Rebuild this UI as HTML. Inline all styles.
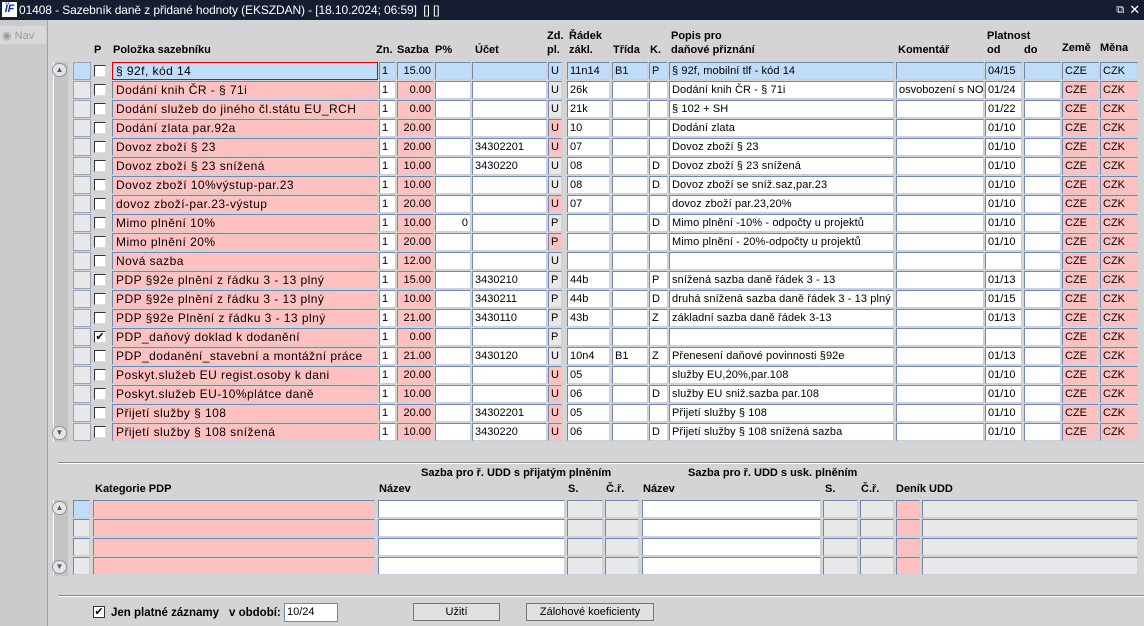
<!DOCTYPE html>
<html><head><meta charset="utf-8"><style>
*{box-sizing:border-box;margin:0;padding:0}
body{width:1144px;height:626px;overflow:hidden;background:#d4d4d4;font-family:"Liberation Sans",sans-serif;font-size:11px;color:#000;position:relative}
.tb{position:absolute;left:0;top:0;width:1144px;height:20px;background:#161d30;color:#fff;font-size:12px;line-height:20px;padding-left:19px;white-space:nowrap;letter-spacing:-0.1px}
.logo{position:absolute;left:2px;top:2px;width:15px;height:15px;background:#fff;color:#1030b0;font-weight:bold;font-style:italic;font-size:11px;line-height:15px;text-align:center}
.lp{position:absolute;left:0;top:20px;width:48px;height:606px;background:#cbcbcb;border-right:1px solid #9aa4b8}
.a{position:absolute}
.h{position:absolute;font-weight:bold;font-size:11px;white-space:nowrap}
.r{position:absolute;left:0;height:18px;width:1144px}
.r>div{position:absolute;top:0;height:18px;border:1px solid #7686a6;border-right-color:#c8d0e0;border-bottom-color:#c8d0e0;background:#fff;line-height:16px;padding-left:2px;white-space:nowrap;overflow:hidden;font-size:11px}
.r>.ind{left:73px;width:18px;background:#e8e8e8;border-color:#9aa4b8}
.r>.cb{left:94px;width:12px;height:12px;top:3px;border:1px solid #333;border-right-color:#ddd;border-bottom-color:#ddd;padding:0;line-height:10px;font-size:11px;text-align:center}
.c1{left:112px;width:266px;background:#ffc0c0!important;font-size:12px!important;letter-spacing:0.45px;padding-left:3px!important}
.c2{left:379px;width:17px}
.c3{left:397px;width:37px;text-align:right;padding-right:2px;background:#ffc0c0!important}
.c4{left:435px;width:36px;text-align:right;padding-right:2px}
.c5{left:472px;width:75px}
.c6{left:548px;width:14px;background:#e8e8e8!important}
.c6.p{background:#ffc0c0!important}
.c7{left:567px;width:43px}
.c8{left:612px;width:36px}
.c9{left:649px;width:19px}
.c10{left:669px;width:225px;letter-spacing:0.1px}
.c11{left:896px;width:88px}
.c12{left:985px;width:37px}
.c13{left:1024px;width:37px}
.c14{left:1062px;width:37px;background:#ffc0c0!important}
.c15{left:1100px;width:38px;background:#ffc0c0!important}
.sel>div{background:#c0dcf8!important}
.sel>.c1{border:1px solid #e00000!important}
.sel>.cb{background:#fff!important}
.sb{position:absolute;left:53px;width:15px;background:#c4c4c4;border-left:1px solid #fff}
.arr{position:absolute;left:52px;width:15px;height:14px;border:1px solid #8a94a8;border-radius:7px;background:#e4e4e4;font-size:8px;line-height:12px;text-align:center;color:#556}
.line{position:absolute;left:58px;width:1086px;height:2px;border-top:1px solid #888;border-bottom:1px solid #fff}
.b>div{position:absolute;height:18px;border:1px solid #7686a6;border-right-color:#c8d0e0;border-bottom-color:#c8d0e0;background:#fff}
.btn{position:absolute;height:18px;border:1px solid #777;background:#e0e0e0;text-align:center;line-height:16px;font-size:11px}
</style></head><body>
<div class="tb"><div class="logo">ÏF</div>01408 - Sazebník daně z přidané hodnoty (EKSZDAN) - [18.10.2024; 06:59]&nbsp; [] []
<span style="position:absolute;right:20px;top:0;font-size:11px">⧉</span><span style="position:absolute;right:4px;top:0;font-size:13px">✕</span></div>
<div class="lp"><div class="a" style="left:0px;top:6px;width:46px;height:18px;background:#d8d8d8"></div><div class="a" style="left:2px;top:9px;color:#999;font-size:11px">◉ Nav</div></div>

<div class="h" style="left:94px;top:44px">P</div>
<div class="h" style="left:113px;top:44px">Položka sazebníku</div>
<div class="h" style="left:376px;top:44px">Zn.</div>
<div class="h" style="left:397px;top:44px">Sazba</div>
<div class="h" style="left:435px;top:44px">P%</div>
<div class="h" style="left:475px;top:44px">Účet</div>
<div class="h" style="left:547px;top:30px">Zd.</div>
<div class="h" style="left:547px;top:44px">pl.</div>
<div class="h" style="left:569px;top:30px">Řádek</div>
<div class="h" style="left:569px;top:44px">zákl.</div>
<div class="h" style="left:613px;top:44px">Třída</div>
<div class="h" style="left:650px;top:44px">K.</div>
<div class="h" style="left:671px;top:30px">Popis pro</div>
<div class="h" style="left:671px;top:44px">daňové přiznání</div>
<div class="h" style="left:898px;top:44px">Komentář</div>
<div class="h" style="left:987px;top:30px">Platnost</div>
<div class="h" style="left:987px;top:44px">od</div>
<div class="h" style="left:1024px;top:44px">do</div>
<div class="h" style="left:1062px;top:42px">Země</div>
<div class="h" style="left:1100px;top:42px">Měna</div>

<div class="sb" style="top:62px;height:380px"></div>
<div class="arr" style="top:63px">▲</div>
<div class="arr" style="top:426px">▼</div>

<div class="r sel" style="top:62px"><div class="ind"></div><div class="cb"></div><div class="c1">§ 92f, kód 14</div><div class="c2">1</div><div class="c3">15.00</div><div class="c4"></div><div class="c5"></div><div class="c6">U</div><div class="c7">11n14</div><div class="c8">B1</div><div class="c9">P</div><div class="c10">§ 92f, mobilní tlf - kód 14</div><div class="c11"></div><div class="c12">04/15</div><div class="c13"></div><div class="c14">CZE</div><div class="c15">CZK</div></div>
<div class="r" style="top:81px"><div class="ind"></div><div class="cb"></div><div class="c1">Dodání knih ČR - § 71i</div><div class="c2">1</div><div class="c3">0.00</div><div class="c4"></div><div class="c5"></div><div class="c6">U</div><div class="c7">26k</div><div class="c8"></div><div class="c9"></div><div class="c10">Dodání knih ČR - § 71i</div><div class="c11">osvobození s NO</div><div class="c12">01/24</div><div class="c13"></div><div class="c14">CZE</div><div class="c15">CZK</div></div>
<div class="r" style="top:100px"><div class="ind"></div><div class="cb"></div><div class="c1">Dodání služeb do jiného čl.státu EU_RCH</div><div class="c2">1</div><div class="c3">0.00</div><div class="c4"></div><div class="c5"></div><div class="c6">U</div><div class="c7">21k</div><div class="c8"></div><div class="c9"></div><div class="c10">§ 102 + SH</div><div class="c11"></div><div class="c12">01/22</div><div class="c13"></div><div class="c14">CZE</div><div class="c15">CZK</div></div>
<div class="r" style="top:119px"><div class="ind"></div><div class="cb"></div><div class="c1">Dodání zlata par.92a</div><div class="c2">1</div><div class="c3">20.00</div><div class="c4"></div><div class="c5"></div><div class="c6 p">U</div><div class="c7">10</div><div class="c8"></div><div class="c9"></div><div class="c10">Dodání zlata</div><div class="c11"></div><div class="c12">01/10</div><div class="c13"></div><div class="c14">CZE</div><div class="c15">CZK</div></div>
<div class="r" style="top:138px"><div class="ind"></div><div class="cb"></div><div class="c1">Dovoz zboží § 23</div><div class="c2">1</div><div class="c3">20.00</div><div class="c4"></div><div class="c5">34302201</div><div class="c6 p">U</div><div class="c7">07</div><div class="c8"></div><div class="c9"></div><div class="c10">Dovoz zboží § 23</div><div class="c11"></div><div class="c12">01/10</div><div class="c13"></div><div class="c14">CZE</div><div class="c15">CZK</div></div>
<div class="r" style="top:157px"><div class="ind"></div><div class="cb"></div><div class="c1">Dovoz zboží § 23 snížená</div><div class="c2">1</div><div class="c3">10.00</div><div class="c4"></div><div class="c5">3430220</div><div class="c6">U</div><div class="c7">08</div><div class="c8"></div><div class="c9">D</div><div class="c10">Dovoz zboží § 23 snížená</div><div class="c11"></div><div class="c12">01/10</div><div class="c13"></div><div class="c14">CZE</div><div class="c15">CZK</div></div>
<div class="r" style="top:176px"><div class="ind"></div><div class="cb"></div><div class="c1">Dovoz zboží 10%výstup-par.23</div><div class="c2">1</div><div class="c3">10.00</div><div class="c4"></div><div class="c5"></div><div class="c6">U</div><div class="c7">08</div><div class="c8"></div><div class="c9">D</div><div class="c10">Dovoz zboží se sníž.saz,par.23</div><div class="c11"></div><div class="c12">01/10</div><div class="c13"></div><div class="c14">CZE</div><div class="c15">CZK</div></div>
<div class="r" style="top:195px"><div class="ind"></div><div class="cb"></div><div class="c1">dovoz zboží-par.23-výstup</div><div class="c2">1</div><div class="c3">20.00</div><div class="c4"></div><div class="c5"></div><div class="c6 p">U</div><div class="c7">07</div><div class="c8"></div><div class="c9"></div><div class="c10">dovoz zboží par.23,20%</div><div class="c11"></div><div class="c12">01/10</div><div class="c13"></div><div class="c14">CZE</div><div class="c15">CZK</div></div>
<div class="r" style="top:214px"><div class="ind"></div><div class="cb"></div><div class="c1">Mimo plnění 10%</div><div class="c2">1</div><div class="c3">10.00</div><div class="c4">0</div><div class="c5"></div><div class="c6">P</div><div class="c7"></div><div class="c8"></div><div class="c9">D</div><div class="c10">Mimo plnění -10% - odpočty u projektů</div><div class="c11"></div><div class="c12">01/10</div><div class="c13"></div><div class="c14">CZE</div><div class="c15">CZK</div></div>
<div class="r" style="top:233px"><div class="ind"></div><div class="cb"></div><div class="c1">Mimo plnění 20%</div><div class="c2">1</div><div class="c3">20.00</div><div class="c4"></div><div class="c5"></div><div class="c6 p">P</div><div class="c7"></div><div class="c8"></div><div class="c9"></div><div class="c10">Mimo plnění - 20%-odpočty u projektů</div><div class="c11"></div><div class="c12">01/10</div><div class="c13"></div><div class="c14">CZE</div><div class="c15">CZK</div></div>
<div class="r" style="top:252px"><div class="ind"></div><div class="cb"></div><div class="c1">Nová sazba</div><div class="c2">1</div><div class="c3">12.00</div><div class="c4"></div><div class="c5"></div><div class="c6">U</div><div class="c7"></div><div class="c8"></div><div class="c9"></div><div class="c10"></div><div class="c11"></div><div class="c12"></div><div class="c13"></div><div class="c14">CZE</div><div class="c15">CZK</div></div>
<div class="r" style="top:271px"><div class="ind"></div><div class="cb"></div><div class="c1">PDP §92e plnění z řádku 3 - 13 plný</div><div class="c2">1</div><div class="c3">15.00</div><div class="c4"></div><div class="c5">3430210</div><div class="c6">P</div><div class="c7">44b</div><div class="c8"></div><div class="c9">P</div><div class="c10">snížená sazba daně řádek 3 - 13</div><div class="c11"></div><div class="c12">01/13</div><div class="c13"></div><div class="c14">CZE</div><div class="c15">CZK</div></div>
<div class="r" style="top:290px"><div class="ind"></div><div class="cb"></div><div class="c1">PDP §92e plnění z řádku 3 - 13 plný</div><div class="c2">1</div><div class="c3">10.00</div><div class="c4"></div><div class="c5">3430211</div><div class="c6">P</div><div class="c7">44b</div><div class="c8"></div><div class="c9">D</div><div class="c10">druhá snížená sazba daně řádek 3 - 13 plný</div><div class="c11"></div><div class="c12">01/15</div><div class="c13"></div><div class="c14">CZE</div><div class="c15">CZK</div></div>
<div class="r" style="top:309px"><div class="ind"></div><div class="cb"></div><div class="c1">PDP §92e Plnění z řádku 3 - 13 plný</div><div class="c2">1</div><div class="c3">21.00</div><div class="c4"></div><div class="c5">3430110</div><div class="c6">P</div><div class="c7">43b</div><div class="c8"></div><div class="c9">Z</div><div class="c10">základní sazba daně řádek 3-13</div><div class="c11"></div><div class="c12">01/13</div><div class="c13"></div><div class="c14">CZE</div><div class="c15">CZK</div></div>
<div class="r" style="top:328px"><div class="ind"></div><div class="cb">✔</div><div class="c1">PDP_daňový doklad k dodanění</div><div class="c2">1</div><div class="c3">0.00</div><div class="c4"></div><div class="c5"></div><div class="c6">P</div><div class="c7"></div><div class="c8"></div><div class="c9"></div><div class="c10"></div><div class="c11"></div><div class="c12"></div><div class="c13"></div><div class="c14">CZE</div><div class="c15">CZK</div></div>
<div class="r" style="top:347px"><div class="ind"></div><div class="cb"></div><div class="c1">PDP_dodanění_stavební a montážní práce</div><div class="c2">1</div><div class="c3">21.00</div><div class="c4"></div><div class="c5">3430120</div><div class="c6">U</div><div class="c7">10n4</div><div class="c8">B1</div><div class="c9">Z</div><div class="c10">Přenesení daňové povinnosti §92e</div><div class="c11"></div><div class="c12">01/13</div><div class="c13"></div><div class="c14">CZE</div><div class="c15">CZK</div></div>
<div class="r" style="top:366px"><div class="ind"></div><div class="cb"></div><div class="c1">Poskyt.služeb EU regist.osoby k dani</div><div class="c2">1</div><div class="c3">20.00</div><div class="c4"></div><div class="c5"></div><div class="c6 p">U</div><div class="c7">05</div><div class="c8"></div><div class="c9"></div><div class="c10">služby EU,20%,par.108</div><div class="c11"></div><div class="c12">01/10</div><div class="c13"></div><div class="c14">CZE</div><div class="c15">CZK</div></div>
<div class="r" style="top:385px"><div class="ind"></div><div class="cb"></div><div class="c1">Poskyt.služeb EU-10%plátce daně</div><div class="c2">1</div><div class="c3">10.00</div><div class="c4"></div><div class="c5"></div><div class="c6 p">U</div><div class="c7">06</div><div class="c8"></div><div class="c9">D</div><div class="c10">služby EU sniž.sazba par.108</div><div class="c11"></div><div class="c12">01/10</div><div class="c13"></div><div class="c14">CZE</div><div class="c15">CZK</div></div>
<div class="r" style="top:404px"><div class="ind"></div><div class="cb"></div><div class="c1">Přijetí služby § 108</div><div class="c2">1</div><div class="c3">20.00</div><div class="c4"></div><div class="c5">34302201</div><div class="c6 p">U</div><div class="c7">05</div><div class="c8"></div><div class="c9"></div><div class="c10">Přijetí služby § 108</div><div class="c11"></div><div class="c12">01/10</div><div class="c13"></div><div class="c14">CZE</div><div class="c15">CZK</div></div>
<div class="r" style="top:423px"><div class="ind"></div><div class="cb"></div><div class="c1">Přijetí služby § 108 snížená</div><div class="c2">1</div><div class="c3">10.00</div><div class="c4"></div><div class="c5">3430220</div><div class="c6 p">U</div><div class="c7">06</div><div class="c8"></div><div class="c9">D</div><div class="c10">Přijetí služby § 108 snížená sazba</div><div class="c11"></div><div class="c12">01/10</div><div class="c13"></div><div class="c14">CZE</div><div class="c15">CZK</div></div>

<div class="line" style="top:462px"></div>
<div class="h" style="left:421px;top:467px">Sazba pro ř. UDD s přijatým plněním</div>
<div class="h" style="left:688px;top:467px">Sazba pro ř. UDD s usk. plněním</div>
<div class="h" style="left:95px;top:483px">Kategorie PDP</div>
<div class="h" style="left:379px;top:483px">Název</div>
<div class="h" style="left:568px;top:483px">S.</div>
<div class="h" style="left:606px;top:483px">Č.ř.</div>
<div class="h" style="left:643px;top:483px">Název</div>
<div class="h" style="left:825px;top:483px">S.</div>
<div class="h" style="left:861px;top:483px">Č.ř.</div>
<div class="h" style="left:896px;top:483px">Deník UDD</div>

<div class="sb" style="top:500px;height:76px"></div>
<div class="arr" style="top:501px">▲</div>
<div class="arr" style="top:560px">▼</div>

<div class="b">
<div style="left:73px;top:500px;width:17px;background:#c0dcf8"></div>
<div style="left:73px;top:519px;width:17px;background:#e8e8e8"></div>
<div style="left:73px;top:538px;width:17px;background:#e8e8e8"></div>
<div style="left:73px;top:557px;width:17px;background:#e8e8e8"></div>
<div style="left:93px;top:500px;width:282px;background:#ffc0c0"></div><div style="left:93px;top:519px;width:282px;background:#ffc0c0"></div><div style="left:93px;top:538px;width:282px;background:#ffc0c0"></div><div style="left:93px;top:557px;width:282px;background:#ffc0c0"></div>
<div style="left:378px;top:500px;width:187px"></div><div style="left:378px;top:519px;width:187px"></div><div style="left:378px;top:538px;width:187px"></div><div style="left:378px;top:557px;width:187px"></div>
<div style="left:567px;top:500px;width:36px;background:#e8e8e8"></div><div style="left:567px;top:519px;width:36px;background:#e8e8e8"></div><div style="left:567px;top:538px;width:36px;background:#e8e8e8"></div><div style="left:567px;top:557px;width:36px;background:#e8e8e8"></div>
<div style="left:605px;top:500px;width:34px;background:#e8e8e8"></div><div style="left:605px;top:519px;width:34px;background:#e8e8e8"></div><div style="left:605px;top:538px;width:34px;background:#e8e8e8"></div><div style="left:605px;top:557px;width:34px;background:#e8e8e8"></div>
<div style="left:642px;top:500px;width:179px"></div><div style="left:642px;top:519px;width:179px"></div><div style="left:642px;top:538px;width:179px"></div><div style="left:642px;top:557px;width:179px"></div>
<div style="left:823px;top:500px;width:35px;background:#e8e8e8"></div><div style="left:823px;top:519px;width:35px;background:#e8e8e8"></div><div style="left:823px;top:538px;width:35px;background:#e8e8e8"></div><div style="left:823px;top:557px;width:35px;background:#e8e8e8"></div>
<div style="left:860px;top:500px;width:34px;background:#e8e8e8"></div><div style="left:860px;top:519px;width:34px;background:#e8e8e8"></div><div style="left:860px;top:538px;width:34px;background:#e8e8e8"></div><div style="left:860px;top:557px;width:34px;background:#e8e8e8"></div>
<div style="left:896px;top:500px;width:24px;background:#ffc0c0"></div><div style="left:896px;top:519px;width:24px;background:#ffc0c0"></div><div style="left:896px;top:538px;width:24px;background:#ffc0c0"></div><div style="left:896px;top:557px;width:24px;background:#ffc0c0"></div>
<div style="left:922px;top:500px;width:216px;background:#e8e8e8"></div><div style="left:922px;top:519px;width:216px;background:#e8e8e8"></div><div style="left:922px;top:538px;width:216px;background:#e8e8e8"></div><div style="left:922px;top:557px;width:216px;background:#e8e8e8"></div>
</div>

<div class="line" style="top:595px"></div>
<div class="a" style="left:93px;top:606px;width:12px;height:12px;border:1px solid #333;background:#fff;font-size:11px;line-height:10px;text-align:center">✔</div>
<div class="h" style="left:111px;top:607px;font-size:11.5px">Jen platné záznamy</div>
<div class="h" style="left:229px;top:607px;font-size:11.5px">v období:</div>
<div class="a" style="left:284px;top:603px;width:54px;height:19px;border:1px solid #7686a6;background:#fff;padding-left:2px;line-height:17px">10/24</div>
<div class="btn" style="left:413px;top:603px;width:87px">Užití</div>
<div class="btn" style="left:526px;top:603px;width:128px">Zálohové koeficienty</div>
</body></html>
